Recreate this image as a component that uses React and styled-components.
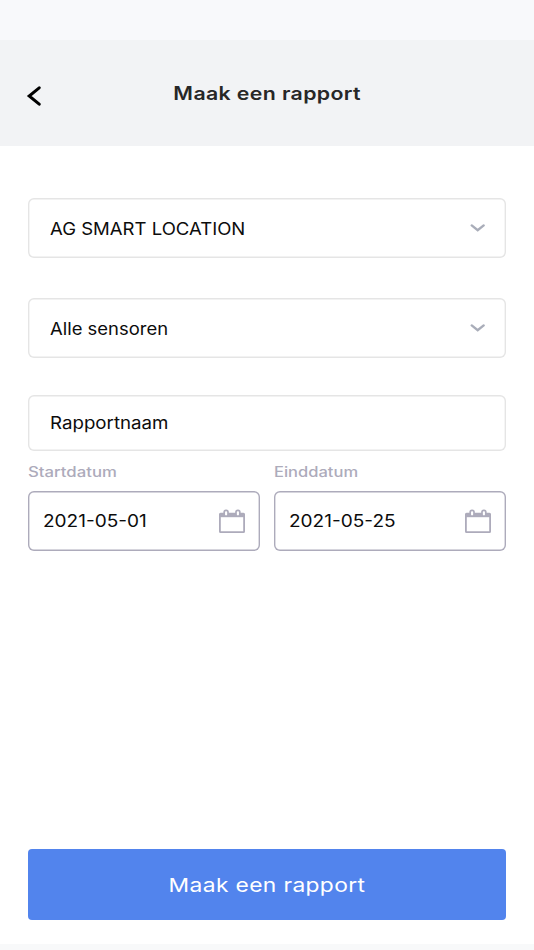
import React from "react";
import styled, { createGlobalStyle } from "styled-components";

const GlobalStyle = createGlobalStyle`
    * {
        box-sizing: border-box;
    }
    body {
        margin: 0;
        background: #fff;
        font-family: Inter, "Liberation Sans", sans-serif;
    }
    button {
        font-family: inherit;
        border: 0;
        padding: 0;
        cursor: pointer;
    }
`;

const Screen = styled.div`
    width: 534px;
    height: 950px;
    display: flex;
    flex-direction: column;
    overflow: hidden;
    background: #fff;
`;

const StatusBar = styled.div`
    height: 40px;
    flex: none;
    background: #f8f9fb;
`;

const Header = styled.header`
    height: 106px;
    flex: none;
    display: grid;
    grid-template-columns: 60px 1fr 60px;
    align-items: center;
    background: #f2f3f5;
`;

const BackButton = styled.button`
    display: flex;
    padding: 5px 0 0 26px;
    background: none;
`;

// wide lettering: glyphs are stretched sideways from the given origin
const WideText = styled.span`
    display: inline-block;
    white-space: nowrap;
    transform: scaleX(${({ $stretch }) => $stretch});
    transform-origin: ${({ $origin }) => $origin || "left"} center;
`;

const Title = styled.h1`
    margin: 0;
    padding-top: 2px;
    text-align: center;
    font-size: 18px;
    line-height: 24px;
    font-weight: 600;
    letter-spacing: 0.3px;
    color: #272727;
`;

const Form = styled.main`
    flex: 1;
    display: flex;
    flex-direction: column;
    padding: 52px 28px 24px;
`;

const Field = styled.div`
    height: ${({ $height }) => $height}px;
    flex: none;
    display: flex;
    align-items: center;
    justify-content: space-between;
    margin-bottom: ${({ $gap }) => $gap}px;
    padding: 0 20px 0 22px;
    border-radius: 6px;
    box-shadow: inset 0 0 0 1.4px #e5e5e5;
    font-size: 17px;
    line-height: 22px;
    color: #0c0c0c;
`;

const SelectBox = styled(Field)`
    padding-top: 2px;

    svg {
        margin-bottom: 2px;
    }
`;

const DateRow = styled.div`
    display: grid;
    grid-template-columns: 1fr 1fr;
    column-gap: 14px;
`;

const DateLabel = styled.div`
    height: 20px;
    margin-bottom: 9px;
    font-size: 14px;
    line-height: 20px;
    font-weight: 500;
    color: #adabbb;
`;

const DateField = styled(Field)`
    padding: 0 15px;
    box-shadow: inset 0 0 0 1.4px #adabbb;
`;

const SubmitButton = styled.button`
    height: 71px;
    margin-top: auto;
    padding-top: 2px;
    border-radius: 4px;
    background: #5284ed;
    font-size: 19px;
    line-height: 26px;
    letter-spacing: 0.3px;
    color: #fff;
`;

const BottomBar = styled.div`
    height: 6px;
    flex: none;
    background: #f8f9fa;
`;

const BackIcon = () => (
    <svg width="16" height="20" viewBox="0 0 16 20" fill="none">
        <path d="M13.2 1.8L3.2 10L13.2 18.2" stroke="#000" strokeWidth="3" strokeLinecap="round" />
    </svg>
);

const ChevronIcon = () => (
    <svg width="17" height="10" viewBox="0 0 17 10" fill="none">
        <path d="M2.7 2.4L8.7 7.2L14.7 2.4" stroke="#a9adb9" strokeWidth="2.4" strokeLinecap="round" />
    </svg>
);

const CalendarIcon = () => (
    <svg width="26" height="24" viewBox="0 0 26 24" fill="none">
        <rect x="0.9" y="4.6" width="24.2" height="18.5" rx="0.6" stroke="#adabbb" strokeWidth="1.8" />
        <path d="M0.9 4.4H25.1V8.2H0.9Z" fill="#adabbb" />
        <rect x="5.2" y="1.3" width="3.8" height="5.9" rx="1.7" fill="#fff" stroke="#adabbb" strokeWidth="1.7" />
        <rect x="17" y="1.3" width="3.8" height="5.9" rx="1.7" fill="#fff" stroke="#adabbb" strokeWidth="1.7" />
    </svg>
);

const SelectField = ({ value, stretch, gap }) => (
    <SelectBox $height={60} $gap={gap}>
        <WideText $stretch={stretch}>{value}</WideText>
        <ChevronIcon />
    </SelectBox>
);

const DatePicker = ({ label, value, labelStretch, stretch }) => (
    <div>
        <DateLabel>
            <WideText $stretch={labelStretch}>{label}</WideText>
        </DateLabel>
        <DateField $height={60} $gap={0}>
            <WideText $stretch={stretch}>{value}</WideText>
            <CalendarIcon />
        </DateField>
    </div>
);

const App = () => (
    <>
        <GlobalStyle />
        <Screen>
            <StatusBar />
            <Header>
                <BackButton aria-label="Terug">
                    <BackIcon />
                </BackButton>
                <Title>
                    <WideText $stretch={1.185} $origin="center">Maak een rapport</WideText>
                </Title>
            </Header>
            <Form>
                <SelectField value="AG SMART LOCATION" stretch={1.09} gap={40} />
                <SelectField value="Alle sensoren" stretch={1.085} gap={37} />
                <Field $height={56} $gap={11}>
                    <WideText $stretch={1.1}>Rapportnaam</WideText>
                </Field>
                <DateRow>
                    <DatePicker label="Startdatum" value="2021-05-01" labelStretch={1.195} stretch={1.12} />
                    <DatePicker label="Einddatum" value="2021-05-25" labelStretch={1.18} stretch={1.12} />
                </DateRow>
                <SubmitButton>
                    <WideText $stretch={1.2} $origin="center">Maak een rapport</WideText>
                </SubmitButton>
            </Form>
            <BottomBar />
        </Screen>
    </>
);

export default App;
